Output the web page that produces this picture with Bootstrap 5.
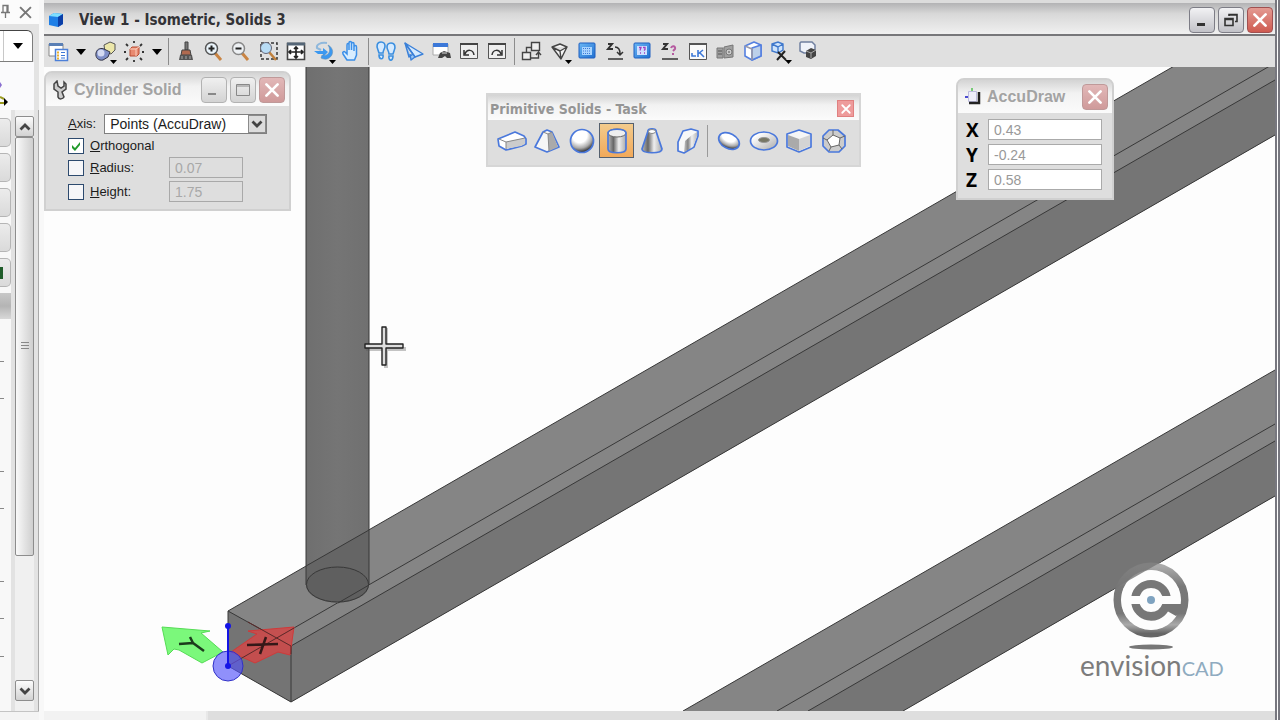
<!DOCTYPE html>
<html lang="en">
<head>
<meta charset="utf-8">
<meta name="viewport" content="width=device-width, initial-scale=1">
<title>View 1 - Isometric, Solids 3</title>
<link href="https://cdn.jsdelivr.net/npm/bootstrap@5.3.0/dist/css/bootstrap.min.css" rel="stylesheet">
<style>
  body { font-family: "Liberation Sans", Arial, sans-serif; font-size: 13px; line-height: 16px; color: #1c1c1c; background: #fdfdfd; }
  button { padding: 0; border: 0; background: none; display: inline-flex; align-items: center; justify-content: center; }
  svg { display: block; }

  /* docked task pane */
  .pane { width: 44px; background: #e3e3e3; border-right: 5px solid #f8f8f8; }
  .pane-head { height: 24px; background: #fbfbfb; gap: 5px; }
  .pane-combo { height: 32px; margin-top: 6px; width: 33px; background: #fff; border: 1px solid #7d7d7d; border-left: 0; border-top-color: #444; border-radius: 0 6px 0 0; }
  .pane-combo button { width: 30px; border-left: 1px solid #c8c8c8; margin-left: 3px; }
  .pane-tool { height: 48px; width: 34px; background: #fafafc; }
  .pane-body { border-right: 1px solid #a9a9a9; }
  .pane-foot { height: 9px; background: #f4f4f4; border-top: 1px solid #c4c4c4; }
  .task-list { width: 15px; border-right: 4px solid #e2e2e2; background: #f8f8f8; }
  .task-btn { height: 29px; margin-bottom: 6px; border: 1px solid #b5b5b5; border-left: 0; border-radius: 0 5px 5px 0; background: linear-gradient(#ececec, #dadada); width: 11px; }
  .task-sel { height: 26px; background: linear-gradient(#c8c8c8, #b4b4b4 50%, #d8d8d8); }
  .tick-list { padding-top: 40px; }
  .scroll-col { width: 19px; background: #f0f0f0; padding: 6px 0 10px; }
  .scroll-btn { height: 21px; border: 1px solid #8d8d8d; border-radius: 2px; background: linear-gradient(#fcfcfc, #d2d2d2); }
  .scroll-thumb { flex: 0 1 419px; border: 1px solid #8d8d8d; border-radius: 2px; background: linear-gradient(90deg, #fafafa, #e6e6e6 45%, #cfcfcf); }

  /* view window */
  .view-win { border-right: 5px double #77777f; }
  .view-title { height: 36px; border-top: 3px solid #dcdcdc; border-bottom: 2px solid #77777a; background: linear-gradient(#b2b2b4, #d8d8d8 35%, #f0f0f0); padding: 2px 2px 0 4px; }
  .view-title h1 { font: bold 15px/20px "DejaVu Sans Condensed", "DejaVu Sans", sans-serif; color: #333337; margin-left: 15px; }
  .win-btns { gap: 3px; }
  .win-btn { width: 26px; height: 26px; border: 1px solid #7d7d86; border-radius: 4px; background: linear-gradient(#f2f2f4, #c2c2c8); }
  .win-close { border-color: #a05050; background: linear-gradient(#e39a92, #cf5a50); }
  .toolbar-row { height: 31px; background: #e0e0e0; padding-left: 2px; }
  .tool-group button { width: 24px; height: 24px; position: relative; }
  .tool-group .drop { width: 12px; }
  .tool-sep { width: 1px; height: 27px; margin: 0 5px; background: #8c8c8c; }
  .g-view { width: 117px; } .g-nav { width: 189px; } .g-cam { width: 135px; } .g-clip { width: 300px; }

  .canvas { background: #fdfdfd; overflow: hidden; }
  .bottom-strip { height: 9px; background: #dedede; }
  .bottom-tab { width: 164px; background: #f2f2f2; border-right: 2px solid #e8e8e8; }

  /* floating tool windows */
  .tool-win { position: absolute; background: #dedede; border: 2px solid #d0d0d0; border-radius: 8px 8px 0 0; }
  .tool-win header { background: linear-gradient(#d4d4d4, #f2f2f2 40%, #fbfbfb); border-radius: 6px 6px 0 0; height: 33px; padding: 0 4px 0 6px; }
  .tool-win h2 { font: bold 16px/18px "Liberation Sans", Arial, sans-serif; color: #a3a3a3; }
  .fade-btn { border-color: #b2b2b2; background: linear-gradient(#f0f0f0, #d3d3d3); }
  .fade-close { border-color: #bf9999; background: linear-gradient(#e2b8b8, #cf9a9a); }

  .win-cylinder { left: 0; top: 4px; width: 247px; height: 140px; }
  .win-cylinder header { gap: 6px; }
  .form-grid { grid-template-columns: 16px 73px 74px; gap: 3px 6px; padding: 0 0 0 22px; }
  .axis-row { gap: 8px; padding: 8px 0 4px 22px; }
  .axis-row select { width: 163px; height: 20px; border: 1px solid #7f7f7f; border-radius: 0; padding: 0 0 0 5px; appearance: none; background: #fff; font-size: 14px; line-height: 16px; color: #1c1c1c; }
  .combo { position: relative; }
  .combo span { position: absolute; right: 1px; top: 1px; width: 18px; height: 18px; border: 1px solid #8b8b8b; background: #dcdcdc; pointer-events: none; display: flex; align-items: center; justify-content: center; }
  .box { appearance: none; width: 16px; height: 16px; margin: 0; border: 1px solid #2d4a6e; background: #f6f6f8; }
  .box:checked { background: #fff url("data:image/svg+xml,%3Csvg xmlns='http://www.w3.org/2000/svg' viewBox='0 0 14 14'%3E%3Cpath d='M3 6l3 3 5-6v3l-5 6-3-3z' fill='%23219a2b'/%3E%3C/svg%3E"); }
  .num { width: 100%; height: 21px; padding: 0 5px; border: 1px solid #a9a9a9; background: #dedede; color: #a8a8a8; font-size: 14px; line-height: 16px; }
  .wide-span { grid-column: 2 / 4; }

  .win-solids { left: 442px; top: 26px; width: 375px; height: 74px; border-radius: 0; border-color: #d6d6d6; }
  .win-solids header { height: 25px; border-radius: 0; padding: 2px 5px 0 2px; }
  .win-solids h2 { font: bold 14px/18px "DejaVu Sans Condensed", Verdana, sans-serif; color: #959595; }
  .mini-close { width: 17px; height: 17px; border: 1px solid #e08080; background: #ee9b9b; }
  .solid-bar { padding: 3px 0 4px 6px; }
  .solid-bar button { width: 35px; height: 35px; }
  .solid-bar .picked { border: 1px solid #55606e; background: linear-gradient(#f3cb8c, #f2a95a); }
  .solid-sep { width: 1px; height: 32px; margin: 0 3px; background: #9a9a9a; }

  .win-accu { left: 912px; top: 11px; width: 158px; height: 122px; }
  .win-accu header { gap: 5px; }
  .accu-grid { grid-template-columns: 18px 114px; gap: 4px; padding: 6px 0 0 8px; }
  .accu-grid label { font: bold 19px/20px "Open Sans", "Liberation Sans", sans-serif; color: #000; }
  .accu-grid .num { background: #fff; color: #999; border-color: #aaa; }

  .brand { position: absolute; right: 51px; bottom: 29px; width: 144px; font-family: Lato, sans-serif; font-size: 28px; line-height: 28px; color: #7c7c7c; white-space: nowrap; }
  .brand small { font-size: 20px; color: #8fabc0; }
</style>
</head>
<body>
<svg width="0" height="0" class="position-absolute" aria-hidden="true">
  <defs>
    <linearGradient id="metal"><stop offset="0" stop-color="#bbb"/><stop offset=".3" stop-color="#666"/><stop offset=".6" stop-color="#eee"/><stop offset="1" stop-color="#aaa"/></linearGradient>
    <linearGradient id="pale" x2="1" y2="1"><stop offset=".2" stop-color="#fff"/><stop offset="1" stop-color="#a9a9a9"/></linearGradient>
    <radialGradient id="ball" cx=".4" cy=".25" r=".8"><stop offset=".4" stop-color="#fff"/><stop offset=".7" stop-color="#aaa"/><stop offset=".95" stop-color="#222"/></radialGradient>
    <linearGradient id="ring" x2="0" y2="1"><stop offset="0" stop-color="#aaa"/><stop offset=".3" stop-color="#787878"/><stop offset=".7" stop-color="#777"/><stop offset=".87" stop-color="#aaa"/><stop offset="1" stop-color="#666"/></linearGradient>
    <linearGradient id="post"><stop offset="0" stop-color="#6f6f6f"/><stop offset=".5" stop-color="#757575"/><stop offset="1" stop-color="#707070"/></linearGradient>
    <linearGradient id="blu" x2="1" y2="1"><stop offset="0" stop-color="#6bb7f5"/><stop offset="1" stop-color="#1f6fd0"/></linearGradient>
    <symbol id="x" viewBox="0 0 16 16"><path d="M3 3l10 10M13 3L3 13" stroke="currentColor" stroke-width="2.4" stroke-linecap="round"/></symbol>
    <symbol id="tri" viewBox="0 0 10 6"><path d="M0 0h10L5 6z"/></symbol>
    <symbol id="chev" viewBox="0 0 12 8"><path d="M1.500 1.500L6 6l4.500-4.500" fill="none" stroke="#444" stroke-width="2.800"/></symbol>
    <symbol id="chev-up" viewBox="0 0 12 8"><path d="M1.500 6.500L6 2l4.500 4.500" fill="none" stroke="#444" stroke-width="2.800"/></symbol>
  </defs>
</svg>

<div class="d-flex vh-100 overflow-hidden">
  <aside class="pane d-flex flex-column flex-shrink-0">
    <div class="pane-head d-flex align-items-center">
      <button aria-label="Pin"><svg width="14" height="16" viewBox="0 0 14 16" fill="none" stroke="#777" stroke-width="1.300"><path d="M3 1.500h5v7H3zM1 8.500h9M5.500 9v5M7 1.500v7"/></svg></button>
      <button aria-label="Close pane"><svg width="13" height="13" viewBox="0 0 12 12" stroke="#777" stroke-width="1.800"><path d="M1 1l10 10M11 1L1 11"/></svg></button>
    </div>
    <div class="pane-combo d-flex"><button aria-label="Choose task"><svg width="10" height="6"><use href="#tri"/></svg></button></div>
    <div class="pane-tool"><svg width="12" height="46" viewBox="0 0 12 46"><path d="M0 20l2 3-2 3" fill="#8a6fd0"/><path d="M0 35l4 2M0 41h5" stroke="#9a9a20" stroke-width="2"/><path d="M4 36l4 4-4 4z"/></svg></div>
    <div class="pane-body d-flex flex-grow-1">
      <div class="task-list d-flex flex-column">
        <div class="pt-2"></div>
        <button class="task-btn" aria-label="Task 1"></button>
        <button class="task-btn" aria-label="Task 2"></button>
        <button class="task-btn" aria-label="Task 3"></button>
        <button class="task-btn" aria-label="Task 4"></button>
        <button class="task-btn justify-content-start" aria-label="Task 5"><svg width="3" height="12"><path d="M0 0h3v12H0z" fill="#1f5c2a"/></svg></button>
        <div class="task-sel"></div>
        <div class="tick-list"><svg width="4" height="300" stroke="#888"><path d="M0 2.500h4M0 39.500h4M0 112.500h4M0 149.500h4M0 222.500h4M0 259.500h4M0 297.500h4"/></svg></div>
      </div>
      <div class="scroll-col d-flex flex-column">
        <button class="scroll-btn" aria-label="Scroll up"><svg width="12" height="8"><use href="#chev-up"/></svg></button>
        <div class="scroll-thumb d-flex align-items-center justify-content-center"><svg width="8" height="9" stroke="#888"><path d="M0 .5h8M0 3.500h8M0 6.500h8"/></svg></div>
        <button class="scroll-btn mt-auto" aria-label="Scroll down"><svg width="12" height="8"><use href="#chev"/></svg></button>
      </div>
    </div>
    <div class="pane-foot"></div>
  </aside>

  <main class="view-win d-flex flex-column flex-grow-1">
    <div class="view-title d-flex align-items-center">
      <svg width="16" height="16" viewBox="0 0 16 16"><path d="M1 4l5-3 9 1v10l-5 3-9-2z" fill="#1f7fe6"/><path d="M1 4l5-3 9 1-5 3z" fill="#7fe0ff"/><path d="M10 5l5-3v10l-5 3z" fill="#0b3fa8"/></svg>
      <h1 class="mb-0 flex-grow-1">View 1 - Isometric, Solids 3</h1>
      <div class="win-btns d-flex">
        <button class="win-btn" aria-label="Minimize"><svg width="16" height="16"><path d="M3 11h8v3H3z" fill="#333"/></svg></button>
        <button class="win-btn" aria-label="Restore"><svg width="16" height="16" viewBox="0 0 16 16" fill="none" stroke="#333" stroke-width="1.600"><path d="M2 6.500h8v7H2zM2 7.500h8M6 4V2.500h8v7h-2M6 3h8"/></svg></button>
        <button class="win-btn win-close text-white" aria-label="Close"><svg width="18" height="18"><use href="#x"/></svg></button>
      </div>
    </div>

    <div class="toolbar-row d-flex align-items-center" role="toolbar" aria-label="View controls">
      <div class="tool-group g-view d-flex align-items-center justify-content-between">
        <button aria-label="View attributes"><svg width="24" height="24" viewBox="0 0 24 24"><path d="M3 4h14v12H3z" fill="#fff" stroke="#888"/><path d="M3 3h14v3H3z" fill="#5a7fb5"/><path d="M9.500 9.500h12v11h-12z" fill="#fff" stroke="#4d80d8" stroke-width="1.500"/><path d="M15 12.500h4M15 15.500h4M15 18h4" stroke="#3c78d8"/><path d="M11 11.500h2v2h-2zM11 14.500h2v2h-2zM11 17.500h2v2h-2z" fill="#e8b030"/></svg></button>
        <button class="drop" aria-label="More attributes"><svg width="10" height="6"><use href="#tri"/></svg></button>
        <button aria-label="Display style"><svg width="24" height="24" viewBox="0 0 24 24"><path d="M11 5l6-3 5 2v6l-4 4-6-2z" fill="#ece7aa" stroke="#555"/><path d="M3 13c1-5 6-5 8-4l6 3-2 5-5 3c-4 1-8-2-7-7z" fill="#7f8fc8" stroke="#334"/><circle cx="8" cy="13" r="3.500" fill="#d4daf2"/><path d="M17 20h7l-3.500 4z"/></svg></button>
        <button aria-label="Brightness"><svg width="24" height="24" viewBox="0 0 24 24"><path d="M12 1v2M12 20v2M2 12h2M20 12h2M4 4l2 2M18 18l2 2M20 4l-2 2M6 18l-2 2" stroke="#333" stroke-width="1.800"/><path d="M8 9l2-2h7v7l-2 2H8z" fill="#e88a70" stroke="#b84a30"/><path d="M8 9h6v7M14 9l3-2" fill="none" stroke="#fbd0c0"/></svg></button>
        <button class="drop" aria-label="More brightness"><svg width="10" height="6"><use href="#tri"/></svg></button>
      </div>
      <div class="tool-sep"></div>
      <div class="tool-group g-nav d-flex align-items-center justify-content-between">
        <button aria-label="Update view"><svg width="24" height="24" viewBox="0 0 24 24"><path d="M11 2h3v8h-3z" fill="#777" stroke="#444"/><path d="M8 10h8l1 5H7z" fill="#b06a50" stroke="#444"/><path d="M6 15h12l1 5H5z" fill="#555"/><path d="M8 16v3M12 16v3M16 16v3" stroke="#aaa"/></svg></button>
        <button aria-label="Zoom in"><svg width="24" height="24" viewBox="0 0 24 24"><path d="M13 13l6 7" stroke="#c98443" stroke-width="3"/><circle cx="9.500" cy="8.500" r="6" fill="#eaf4fb" stroke="#555" stroke-width="1.500"/><path d="M6.500 8.500h6M9.500 5.500v6" stroke="#222" stroke-width="2"/></svg></button>
        <button aria-label="Zoom out"><svg width="24" height="24" viewBox="0 0 24 24"><path d="M13 13l6 7" stroke="#c98443" stroke-width="3"/><circle cx="9.500" cy="8.500" r="6" fill="#eef1f4" stroke="#888" stroke-width="1.500"/><path d="M6.500 8.500h6" stroke="#222" stroke-width="2"/></svg></button>
        <button aria-label="Window area"><svg width="24" height="24" viewBox="0 0 24 24"><path d="M4 3h16v16H4z" fill="none" stroke="#333" stroke-width="1.500" stroke-dasharray="3 2"/><path d="M12 12l7 8" stroke="#c0803c" stroke-width="2.500"/><circle cx="9" cy="8" r="5.500" fill="#b8dcf5" stroke="#667"/></svg></button>
        <button aria-label="Fit view"><svg width="24" height="24" viewBox="0 0 24 24"><path d="M3.500 3.500h17v16h-17z" fill="#fff" stroke="#444" stroke-width="1.600"/><path d="M3 4h18" stroke="#567" stroke-width="3"/><path d="M5 12h14M12 7v11M7 10l-2 2 2 2M17 10l2 2-2 2M10 16l2 2 2-2M10 9l2-2 2 2" fill="none" stroke="#222" stroke-width="1.700"/></svg></button>
        <button aria-label="Rotate view"><svg width="24" height="24" viewBox="0 0 24 24"><path d="M15 3C8 2 4 5 5 8l4 2" fill="none" stroke="#8fb8dc" stroke-width="2"/><path d="M2 11h9V8l5 4-5 5v-3H6z" fill="#3b98f0"/><path d="M16 5c6 3 6 10 1 13-3 2-6 1-8 0l1-3c6 2 10-4 6-10z" fill="#3b98f0" stroke="#6a90b0" stroke-width=".6"/><path d="M17 20h7l-3.500 4z"/></svg></button>
        <button aria-label="Pan view"><svg width="24" height="24" viewBox="0 0 24 24"><path d="M8 20l-4-6c-1-2 1-3 2-2l2 2V5c0-2 2-2 2 0v5-7c0-2 2.500-2 2.500 0v7-6c0-2 2.500-2 2.500 0v7-4c0-2 2.500-2 2.500 0v8l-2 5z" fill="#d8edff" stroke="#3b8fe8" stroke-width="1.500"/></svg></button>
      </div>
      <div class="tool-sep"></div>
      <div class="tool-group g-cam d-flex align-items-center justify-content-between">
        <button aria-label="Walk"><svg width="24" height="24" viewBox="0 0 24 24" fill="#d5eaff" stroke="#3b8fe0" stroke-width="1.600"><path d="M7 2c-4 0-5 4-3 8l1 3h4c0-3 2-4 2-7 0-2-1-4-4-4zM5 15h4c1 5-4 5-4 0zM17 3c4 0 5 4 3 8l-1 3h-4c0-3-2-4-2-7 0-2 1-4 4-4zM15 16h4c0 6-5 5-4 0z"/></svg></button>
        <button aria-label="Fly"><svg width="24" height="24" viewBox="0 0 24 24" stroke="#3b80d8" stroke-width="1.400" stroke-linejoin="round"><path d="M3 3l18 11-8 3z" fill="#d5eaff"/><path d="M3 3l4 14 4-3M3 3l10 14-4 3-1-6" fill="#9ac8f8"/></svg></button>
        <button aria-label="Navigate view"><svg width="24" height="24" viewBox="0 0 24 24"><path d="M3 4h15v11H3z" fill="#fff" stroke="#aaa"/><path d="M3 3h15v4H3z" fill="#3c78d8"/><path d="M8 18l2-5 4-2 6 2 1 5h-4l-2-2-3 2z" fill="#444"/><path d="M12 13h5" stroke="#ddd"/></svg></button>
        <button aria-label="View previous"><svg width="24" height="24" viewBox="0 0 24 24"><path d="M3.500 4.500h17v14h-17z" fill="#eee" stroke="#555"/><path d="M3 4h18" stroke="#444" stroke-width="2"/><path d="M8 14c2-5 8-5 9 1M7 10v5h5" fill="none" stroke="#333" stroke-width="1.500"/></svg></button>
        <button aria-label="View next"><svg width="24" height="24" viewBox="0 0 24 24"><path d="M3.500 4.500h17v14h-17z" fill="#eee" stroke="#555"/><path d="M3 4h18" stroke="#444" stroke-width="2"/><path d="M16 14c-2-5-8-5-9 1M17 10v5h-5" fill="none" stroke="#333" stroke-width="1.500"/></svg></button>
      </div>
      <div class="tool-sep"></div>
      <div class="tool-group g-clip d-flex align-items-center justify-content-between">
        <button aria-label="Copy view"><svg width="24" height="24" viewBox="0 0 24 24" fill="#eee" stroke="#444" stroke-width="1.400"><path d="M11.500 2.500h8v8h-8zM2.500 12.500h8v7h-8zM6.500 12V7.500H11M11 18h7.500v-5M16 15l2.500-3 2.500 3" /></svg></button>
        <button aria-label="View perspective"><svg width="24" height="24" viewBox="0 0 24 24" fill="#f4f4f4" stroke="#444" stroke-width="1.400" stroke-linejoin="round"><path d="M4 7l8-3 7 3-6 12zM4 7l8 4 7-4M12 11l1 8"/><path d="M17 20h7l-3.500 4z" fill="#000" stroke="none"/></svg></button>
        <button aria-label="Clip display"><svg width="24" height="24" viewBox="0 0 24 24"><rect x="4" y="3" width="16" height="15" rx="1" fill="url(#blu)" stroke="#1f5fc0"/><path d="M7 7h10v8H7z" fill="#a8d4ff"/><path d="M8 8.500h8M8 11h8M8 13.500h8" stroke="#3c78d8" stroke-dasharray="1 1"/></svg></button>
        <button aria-label="Active depth"><svg width="24" height="24" viewBox="0 0 24 24" fill="none" stroke="#333" stroke-width="1.500"><path d="M5 4h4l-4 5h5" stroke-width="2"/><path d="M12 7c4 0 5 3 5 7M14 12l3 3 3-3M5 19h15"/></svg></button>
        <button aria-label="Show display depth"><svg width="24" height="24" viewBox="0 0 24 24"><rect x="4" y="3" width="16" height="15" rx="1" fill="url(#blu)" stroke="#1f5fc0"/><path d="M7 6h10v9H7z" fill="#cfe0ff"/><path d="M9 7.500h2l-1 3M13 7.500h2v2l-1 1M10 13h1M14 13h1" fill="none" stroke="#a040c0" stroke-width="1.300"/></svg></button>
        <button aria-label="Show active depth"><svg width="24" height="24" viewBox="0 0 24 24" fill="none" stroke="#333" stroke-width="1.500"><path d="M5 4h4l-4 5h5" stroke-width="2"/><path d="M13 8c1-3 5-2 4 1l-2 2M15 13v2" stroke="#b55aa0" stroke-width="2"/><path d="M4 19h16"/></svg></button>
        <button aria-label="Change view"><svg width="24" height="24" viewBox="0 0 24 24"><path d="M3.500 4.500h17v15h-17z" fill="#fafafa" stroke="#555"/><path d="M3 4h18" stroke="#555" stroke-width="2"/><path d="M6 13v3h4M12 10v7M12 14l5-4M14 13l4 4" fill="none" stroke="#3c78d8" stroke-width="1.600"/></svg></button>
        <button aria-label="Camera"><svg width="24" height="24" viewBox="0 0 24 24" fill="#a0a0a0" stroke="#777"><path d="M4 8h6v10H4zM11 7l9-2v12l-9 1z"/><circle cx="16" cy="12" r="3" fill="#ccc"/><path d="M5 11h4M5 14h4M15 12h2" stroke="#555"/></svg></button>
        <button aria-label="Clip volume"><svg width="24" height="24" viewBox="0 0 24 24" stroke="#5580e0" stroke-width="1.600" stroke-linejoin="round"><path d="M4 6l9-4 7 3v11l-9 4-7-4z" fill="#fff"/><path d="M11 8l9-3v11l-9 4z" fill="#bcd0ea"/><path d="M4 6l7 3v11" fill="none" stroke="#99a"/></svg></button>
        <button aria-label="Clip mask"><svg width="24" height="24" viewBox="0 0 24 24" stroke="#3f78cc" stroke-width="1.400"><path d="M4 4l6-2 5 2v6l-5 3-6-2zM4 4l6 3v6M10 7l5-3" fill="#cfe4fb"/><path d="M10 12l8 8M17 11l-8 9" stroke="#222" stroke-width="2"/><path d="M17 20h7l-3.500 4z" fill="#000" stroke="none"/></svg></button>
        <button aria-label="Save view"><svg width="24" height="24" viewBox="0 0 24 24"><path d="M5 2h11l3 3v8H8l-4-2V3z" fill="#f0f3fa" stroke="#7080a0" stroke-width="1.500"/><path d="M10 11l5-3 5 2v6l-5 3-5-2z" fill="#444"/><path d="M10 11l5 2 5-3M15 13v5" fill="none" stroke="#aaa"/></svg></button>
      </div>
    </div>

    <div class="canvas position-relative flex-grow-1">
      <svg class="w-100 h-100 position-absolute" viewBox="44 67 1231 644" preserveAspectRatio="xMinYMin slice" stroke-linejoin="round" aria-label="Isometric drawing">
        <g stroke="#383838">
          <path d="M228 611L1275 8V135L291 702l-63-36z" fill="#858585" stroke="none"/>
          <path d="M291 646L1275 80v55L291 702z" fill="#757575" stroke="none"/>
          <path d="M228 611L1275 8M228 666L1275 63M291 646L1275 80M291 702L1275 135" fill="none"/>
          <path d="M228 611l63 35v56l-63-36z" fill="#747474"/>
          <path d="M683 711L1275 370v126L903 711z" fill="#858585" stroke="none"/>
          <path d="M808 711L1275 441v55L903 711z" fill="#757575" stroke="none"/>
          <path d="M683 711L1275 370M777 711l498-287M808 711l467-270M903 711l372-215" fill="none"/>
          <path d="M306 60h63v525a31.500 17.500 0 0 1-63 0z" fill="url(#post)" stroke="none"/>
          <path d="M306 566l63-36v55a31.500 17.500 0 0 1-63 0z" fill="#656565" stroke="none"/>
          <path d="M306 60v525M369 60v525M306 566l63-36" fill="none"/>
          <ellipse cx="337.500" cy="584.500" rx="31" ry="17.500" fill="#5f5f5f"/>
          <path d="M338 603l31-18" fill="none"/>
        </g>
        <path d="M162 627l48 4-9 2 22 19-21 11-23-13-5-1-6 6z" fill="#7bf87b" stroke="#55dc55"/>
        <path d="M179 644l14-1 11 8M193 643l-3-6" stroke="#1c3c1c" stroke-width="2.500" fill="none"/>
        <path d="M294 627l-46 4 9 3-26 18 24 11 23-11 12 3z" fill="#cc4a4a" fill-opacity=".9" stroke="#cf3a3a"/>
        <path d="M228 666l66-38M248 622l43 24v8" fill="none" stroke="#5b2a2a"/>
        <path d="M247 645l31-1M266 637l-6 17" stroke="#341818" stroke-width="2.500"/>
        <circle cx="228" cy="666" r="15" fill="#5656fa" fill-opacity=".65" stroke="#3030c8"/>
        <path d="M228 626v40" stroke="#1414e6" stroke-width="2"/>
        <circle cx="228" cy="626" r="3" fill="#1414e6"/><circle cx="228" cy="666" r="3" fill="#1414e6"/>
        <g opacity=".35" transform="translate(2 2)"><path d="M364 345h40v4h-40zM382 326h4v40h-4z" fill="#555"/></g>
        <path d="M382 327h4v17h17v4h-17v17h-4v-17h-17v-4h17z" fill="#ddd" stroke="#222" stroke-width="1.400"/>
      </svg>

      <section class="tool-win win-cylinder">
        <header class="d-flex align-items-center">
          <svg width="16" height="20" viewBox="0 0 16 20" fill="#ccc" stroke="#444" stroke-width="1.500"><path d="M5 1l-3 3v5l4 3v5c1 3 5 2 6 0l-2-5 4-3V4l-2-2v4L9 8 6 6z"/></svg>
          <h2 class="mb-0 flex-grow-1">Cylinder Solid</h2>
          <div class="win-btns d-flex">
            <button class="win-btn fade-btn" aria-label="Minimize"><svg width="16" height="16"><path d="M2 11h8v2H2z" fill="#888"/></svg></button>
            <button class="win-btn fade-btn" aria-label="Maximize"><svg width="16" height="16" fill="none" stroke="#888"><path d="M1.500 2.500h13v11h-13zM1 4h14"/></svg></button>
            <button class="win-btn fade-close text-white" aria-label="Close"><svg width="18" height="18"><use href="#x"/></svg></button>
          </div>
        </header>
        <div class="axis-row d-flex align-items-center">
          <label for="axis"><u>A</u>xis:</label>
          <div class="combo"><select id="axis"><option>Points (AccuDraw)</option></select><span><svg width="12" height="8"><use href="#chev"/></svg></span></div>
        </div>
        <div class="form-grid d-grid align-items-center">
          <input class="box" type="checkbox" id="ortho" checked><label class="wide-span" for="ortho"><u>O</u>rthogonal</label>
          <input class="box" type="checkbox" id="rad"><label for="rad"><u>R</u>adius:</label><input class="num" value="0.07" aria-label="Radius value" disabled>
          <input class="box" type="checkbox" id="hgt"><label for="hgt"><u>H</u>eight:</label><input class="num" value="1.75" aria-label="Height value" disabled>
        </div>
      </section>

      <section class="tool-win win-solids">
        <header class="d-flex align-items-center justify-content-between">
          <h2 class="mb-0">Primitive Solids - Task</h2>
          <button class="mini-close text-white" aria-label="Close"><svg width="12" height="12"><use href="#x"/></svg></button>
        </header>
        <div class="solid-bar d-flex align-items-center">
          <button aria-label="Slab"><svg width="30" height="26" viewBox="0 0 30 26" stroke-linejoin="round"><path d="M1 11l17-7 9 4 2 3v5l-4 2-16 4-7-4z" fill="#fff" stroke="#4a78dc" stroke-width="1.700"/><path d="M9 14l19-4v6l-4 2-15 3z" fill="#ccc"/><path d="M2 11l7 3 19-4M9 14v7" fill="none" stroke="#888"/></svg></button>
          <button aria-label="Pyramid"><svg width="26" height="26" viewBox="0 0 26 26" stroke-linejoin="round"><path d="M9 4l4-2 5 2 7 15-12 5L1 19z" fill="#f6f6f6" stroke="#4a78dc" stroke-width="1.700"/><path d="M14 6l4-2 6 15-9 4z" fill="#aaa"/><path d="M9 4l5 2 4-2M14 6l1 17" fill="none" stroke="#888"/></svg></button>
          <button aria-label="Sphere"><svg width="26" height="26"><circle cx="13" cy="13" r="11.500" fill="url(#ball)" stroke="#4a78dc" stroke-width="1.700"/></svg></button>
          <button class="picked" aria-label="Cylinder"><svg width="22" height="28" viewBox="0 0 22 28"><path d="M2 6v16c0 5 18 5 18 0V6z" fill="url(#metal)"/><ellipse cx="11" cy="6" rx="9" ry="4" fill="#eee" stroke="#666"/><path d="M2 6v16c0 5 18 5 18 0V6c0-5-18-5-18 0z" fill="none" stroke="#4a78dc" stroke-width="1.700"/></svg></button>
          <button aria-label="Cone"><svg width="24" height="28" viewBox="0 0 24 28"><path d="M8 4c0-3 8-3 8 0l6 18c0 5-20 5-20 0z" fill="url(#metal)" stroke="#4a78dc" stroke-width="1.700"/><ellipse cx="12" cy="4.500" rx="3.500" ry="2" fill="#fff" stroke="#888"/></svg></button>
          <button aria-label="Wedge"><svg width="26" height="28" viewBox="0 0 26 28" stroke-linejoin="round"><path d="M9 4l8-2 7 2v5l-4 11-10 6-6-2V15z" fill="#f8f8f8" stroke="#4a78dc" stroke-width="1.700"/><path d="M10 25l1-11 7-6 5-3v4l-4 11z" fill="url(#metal)" opacity=".8"/></svg></button>
          <div class="solid-sep"></div>
          <button aria-label="Ellipsoid"><svg width="26" height="24"><ellipse cx="13" cy="12" rx="11" ry="7.500" transform="rotate(28 13 12)" fill="url(#ball)" stroke="#4a78dc" stroke-width="1.700"/></svg></button>
          <button aria-label="Torus"><svg width="30" height="22"><ellipse cx="15" cy="11" rx="13.500" ry="9" fill="url(#pale)" stroke="#4a78dc" stroke-width="1.700"/><ellipse cx="15" cy="10" rx="5.500" ry="2.500" fill="#776" stroke="#999"/></svg></button>
          <button aria-label="Polyhedral block"><svg width="28" height="26" viewBox="0 0 28 26" stroke-linejoin="round"><path d="M2 6l12-4 12 4v13l-12 5-12-5z" fill="#f6f6f6" stroke="#4a78dc" stroke-width="1.700"/><path d="M3 7l11 4v12L3 18z" fill="#aaa"/><path d="M14 11l11-4v11l-11 5z" fill="#d4d4d4"/></svg></button>
          <button aria-label="Polyhedron"><svg width="26" height="26" viewBox="0 0 26 26" stroke-linejoin="round"><path d="M8 2h9l7 6v10l-6 6H8l-6-6V8z" fill="#ccc" stroke="#4a78dc" stroke-width="1.700"/><path d="M12 7l7 3-1 7-8 2-4-7zM12 7V2M19 10l5-2M18 17l3 4M10 19l-2 4M6 12L2 10" fill="#fff" stroke="#666"/></svg></button>
        </div>
      </section>

      <section class="tool-win win-accu">
        <header class="d-flex align-items-center">
          <svg width="18" height="18" viewBox="0 0 18 18"><path d="M1 9h3M7 9h3" stroke="#4a4ad0" stroke-width="2"/><path d="M8 0v5" stroke="#50c050" stroke-width="1.500"/><path d="M4.500 3.500h8v10h-8z" fill="#eeeefa" stroke="#bbd"/><path d="M15 4v11H5" fill="none" stroke="#222" stroke-width="2.500"/></svg>
          <h2 class="mb-0 flex-grow-1">AccuDraw</h2>
          <button class="win-btn fade-close text-white" aria-label="Close"><svg width="18" height="18"><use href="#x"/></svg></button>
        </header>
        <div class="accu-grid d-grid align-items-center">
          <label for="ax">X</label><input class="num" id="ax" value="0.43">
          <label for="ay">Y</label><input class="num" id="ay" value="-0.24">
          <label for="az">Z</label><input class="num" id="az" value="0.58">
        </div>
      </section>

      <div class="brand">
        <svg class="mx-auto" width="80" height="90" viewBox="1112 561 80 90" fill="none">
          <circle cx="1151" cy="600" r="33.500" stroke="url(#ring)" stroke-width="8"/>
          <circle cx="1151" cy="600" r="30" fill="#fdfdfd"/>
          <path d="M1131.400 596a20 20 0 0 1 39.200 0h-8.300a12 12 0 0 0-22.600 0z" fill="#777"/>
          <path d="M1131.400 604h8.300a12 12 0 0 0 22.600 0H1182l-1 8-5 4-8-4.500a20 20 0 0 1-36.600-7.500z" fill="#777"/>
          <path d="M1112 561h51l-51 29z" fill="#757575" opacity=".8"/>
          <circle cx="1151" cy="600" r="4" fill="#7fa3c0"/>
          <ellipse cx="1151" cy="647" rx="22" ry="2.500" fill="#777"/>
        </svg>
        <div>envision<small>CAD</small></div>
      </div>
    </div>
    <footer class="bottom-strip d-flex"><div class="bottom-tab"></div></footer>
  </main>
</div>
<script src="https://cdn.jsdelivr.net/npm/bootstrap@5.3.0/dist/js/bootstrap.bundle.min.js"></script>
</body>
</html>
